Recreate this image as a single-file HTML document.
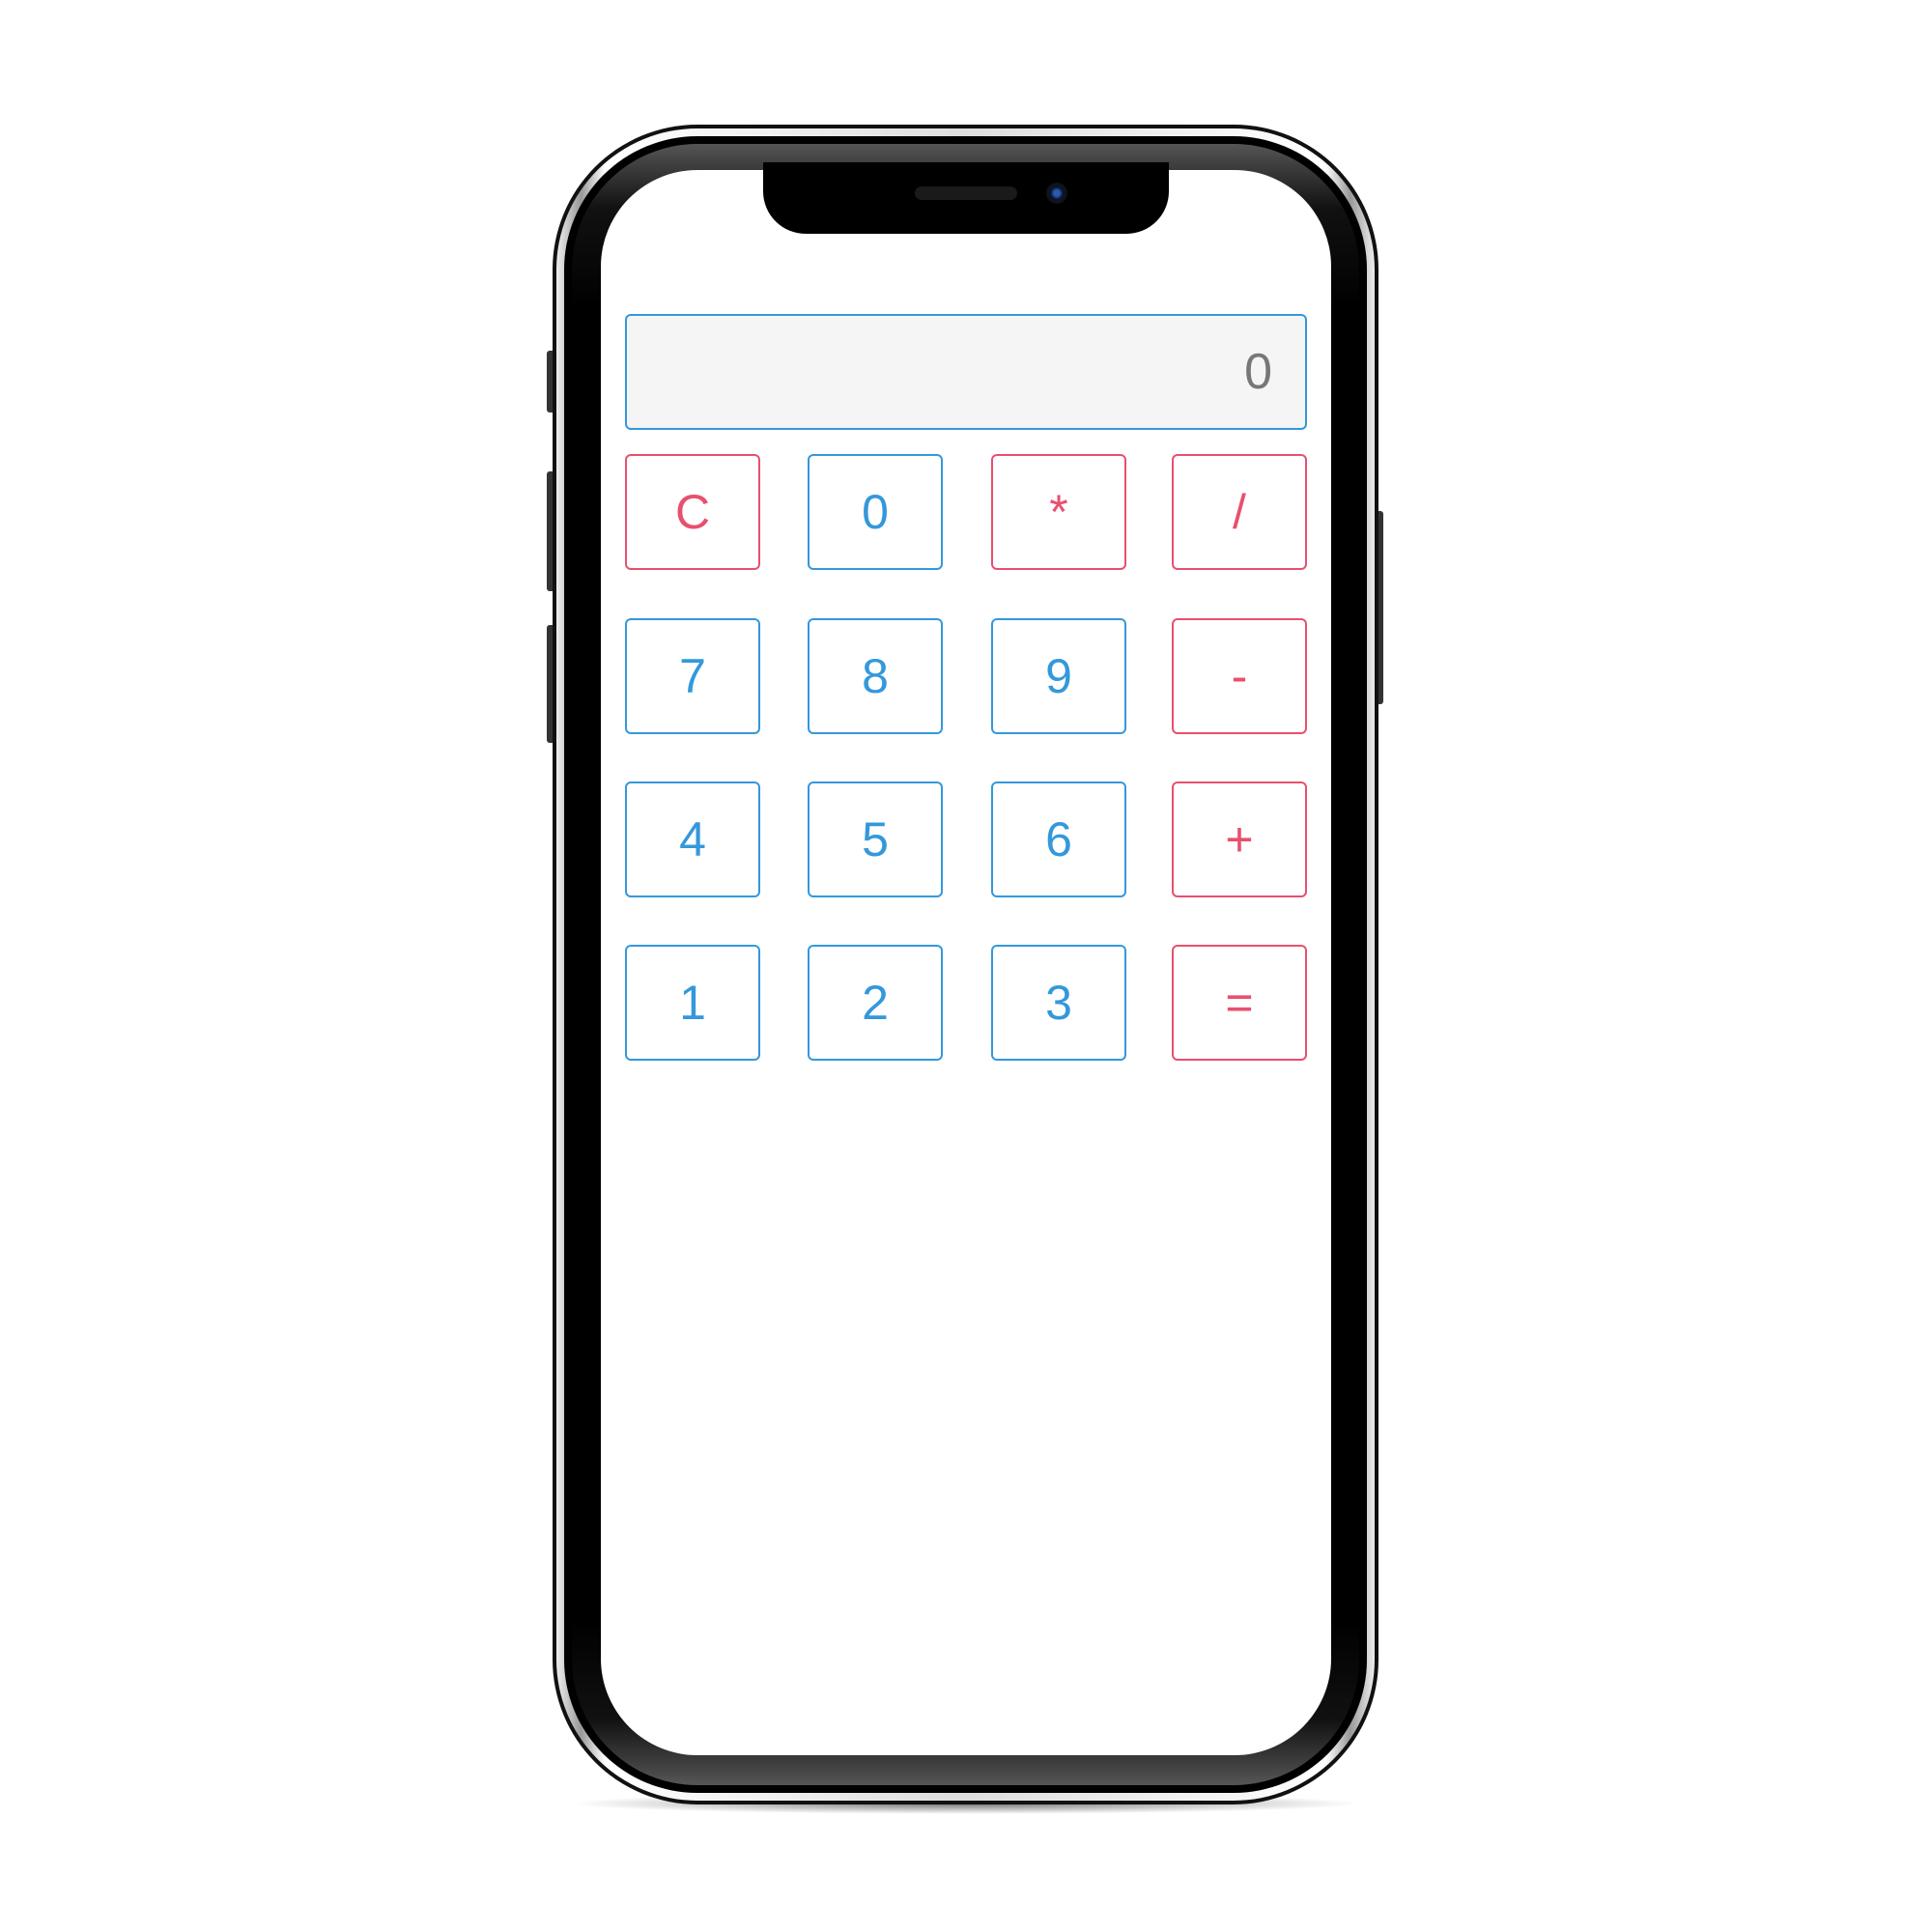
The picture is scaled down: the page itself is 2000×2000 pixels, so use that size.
<!DOCTYPE html>
<html><head><meta charset="utf-8"><style>
*{margin:0;padding:0;box-sizing:border-box}
body{width:2000px;height:2000px;background:#fff;position:relative;overflow:hidden;font-family:"Liberation Sans","DejaVu Sans",sans-serif}
.abs{position:absolute}
.shadow{left:586px;top:1856px;width:826px;height:22px;border-radius:50%;background:radial-gradient(ellipse at center,rgba(0,0,0,.55),rgba(0,0,0,0) 70%)}
.outer{left:572px;top:129px;width:855px;height:1739px;border-radius:150px;background:#111;}
.ring{left:576px;top:133px;width:847px;height:1731px;border-radius:146px;background:linear-gradient(90deg,#eee,#999 3%,#fff 6%,#ddd 50%,#fff 94%,#999 97%,#eee);}
.ring2{left:584px;top:141px;width:831px;height:1715px;border-radius:138px;background:#000}
.ring3{left:592px;top:149px;width:815px;height:1699px;border-radius:130px;background:linear-gradient(180deg,#555,#111 4%,#000 10%,#000 90%,#111 96%,#555)}
.screen{left:622px;top:176px;width:756px;height:1641px;border-radius:100px;background:#fff}
.notch{left:790px;top:168px;width:420px;height:74px;background:#000;border-radius:0 0 44px 44px}
.spk{left:947px;top:193px;width:106px;height:14px;border-radius:7px;background:#1a1a1a}
.cam{left:1083px;top:189px;width:22px;height:22px;border-radius:50%;background:radial-gradient(circle,#2a5ab0 0 20%,#0a1530 40%,#111 70%)}
.side{background:#333;border-radius:3px}
.disp{left:647px;top:325px;width:706px;height:120px;background:#f5f5f5;border:2px solid #3498db;border-radius:6px;color:#777;font-size:52px;text-align:right;padding-right:34px;line-height:116px}
.b{width:140px;height:120px;border:2px solid #3498db;border-radius:6px;color:#3498db;font-size:50px;display:flex;align-items:center;justify-content:center;background:#fff}
.r{border-color:#e8506e;color:#e8506e}
</style></head><body>
<div class="abs shadow"></div>
<div class="abs side" style="left:566px;top:363px;width:9px;height:64px"></div>
<div class="abs side" style="left:566px;top:488px;width:9px;height:124px"></div>
<div class="abs side" style="left:566px;top:647px;width:9px;height:122px"></div>
<div class="abs side" style="left:1424px;top:529px;width:8px;height:200px"></div>
<div class="abs outer"></div>
<div class="abs ring"></div>
<div class="abs ring2"></div>
<div class="abs ring3"></div>
<div class="abs screen"></div>
<div class="abs notch"></div>
<div class="abs spk"></div>
<div class="abs cam"></div>
<div class="abs disp">0</div>
<div class="abs b r" style="left:647px;top:470px">C</div>
<div class="abs b" style="left:836px;top:470px">0</div>
<div class="abs b r" style="left:1026px;top:470px">*</div>
<div class="abs b r" style="left:1213px;top:470px">/</div>
<div class="abs b" style="left:647px;top:640px">7</div>
<div class="abs b" style="left:836px;top:640px">8</div>
<div class="abs b" style="left:1026px;top:640px">9</div>
<div class="abs b r" style="left:1213px;top:640px">-</div>
<div class="abs b" style="left:647px;top:809px">4</div>
<div class="abs b" style="left:836px;top:809px">5</div>
<div class="abs b" style="left:1026px;top:809px">6</div>
<div class="abs b r" style="left:1213px;top:809px">+</div>
<div class="abs b" style="left:647px;top:978px">1</div>
<div class="abs b" style="left:836px;top:978px">2</div>
<div class="abs b" style="left:1026px;top:978px">3</div>
<div class="abs b r" style="left:1213px;top:978px">=</div>
</body></html>
